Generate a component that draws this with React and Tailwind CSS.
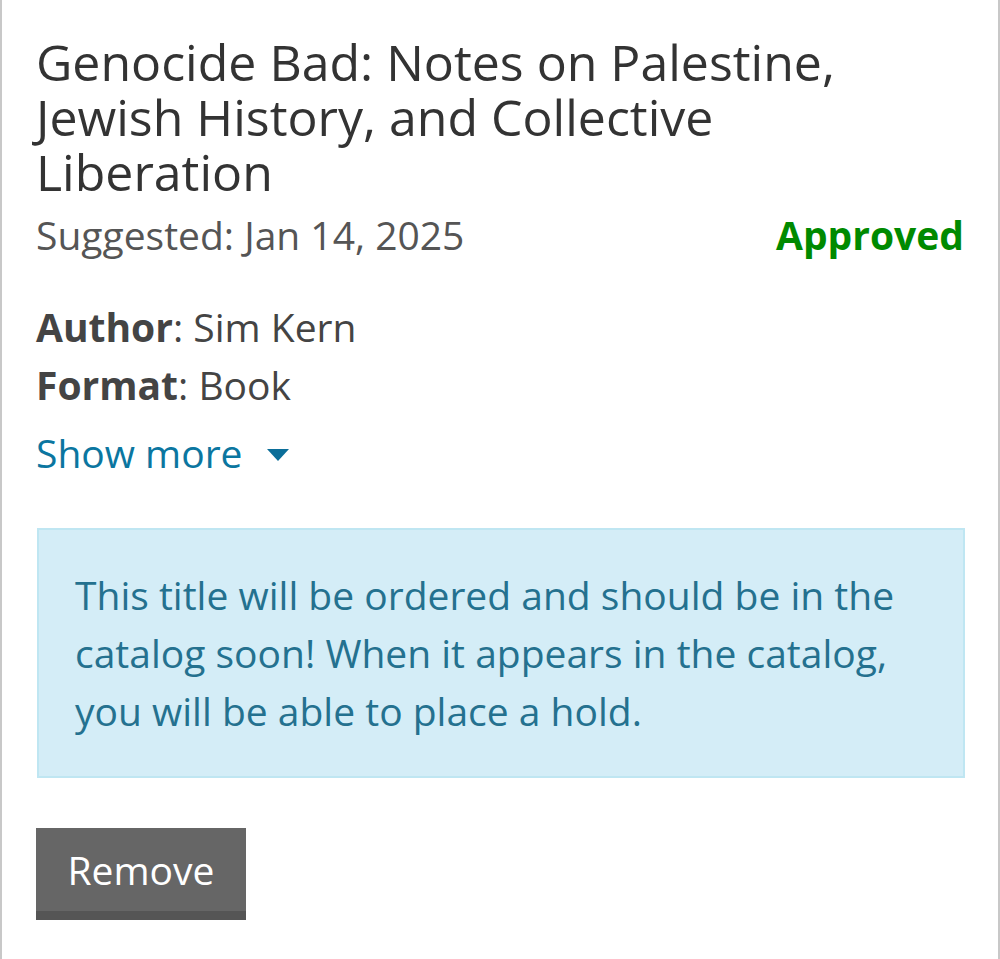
export default function App() {
  return (
    <div className="w-[1000px] h-[959px] bg-white border-l-2 border-r-2 border-[#c8c8c8] overflow-hidden" style={{ fontFamily: '"Open Sans", sans-serif' }}>
      <div className="pl-[34px] pr-[34px] pt-[35px]">
        <h1 className="max-w-[900px] text-[50px] leading-[55px] text-[#333] font-normal">
          Genocide Bad: Notes on Palestine, Jewish History, and Collective Liberation
        </h1>
        <div className="flex justify-between items-baseline mt-[6px]">
          <div className="text-[39px] leading-[58px] text-[#555]">Suggested: Jan 14, 2025</div>
          <div className="text-[39px] leading-[58px] font-bold text-[#008a00]">Approved</div>
        </div>
        <div className="mt-[34px] text-[39px] leading-[58px] text-[#444]">
          <div><span className="font-bold">Author</span>: Sim Kern</div>
          <div><span className="font-bold">Format</span>: Book</div>
        </div>
        <div className="mt-[10px] flex items-center text-[39px] leading-[58px] text-[#0b76a0]">
          <span>Show more</span>
          <svg width="22" height="12" viewBox="0 0 22 12" className="ml-[24px] mt-[4px]">
            <polygon points="0,0 22,0 11,12" fill="#0b6e99" />
          </svg>
        </div>
        <div className="mt-[46px] ml-[1px] w-[928px] h-[250px] bg-[#d4edf7] border-2 border-[#bfe6f2] px-[36px] pt-[36px] text-[39px] leading-[58px] text-[#24718f]">
          This title will be ordered and should be in the catalog soon! When it appears in the catalog, you will be able to place a hold.
        </div>
        <button className="mt-[50px] w-[210px] h-[92px] bg-[#666] border-b-[9px] border-[#555] text-white text-[39px] flex items-center justify-center pt-[2px]">
          Remove
        </button>
      </div>
    </div>
  );
}
